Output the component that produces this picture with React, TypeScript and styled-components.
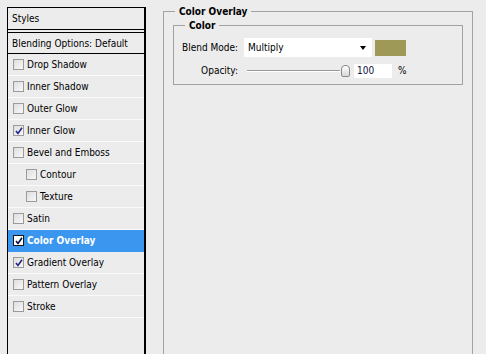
import React from 'react';
import styled, { createGlobalStyle } from 'styled-components';

const Global = createGlobalStyle`
  html, body { margin: 0; padding: 0; background: #ececec; }
  body {
    font-family: "DejaVu Sans Condensed", "DejaVu Sans", sans-serif;
    font-stretch: condensed;
    font-size: 10px;
    color: #000;
  }
  * { box-sizing: border-box; }
`;

const Page = styled.div`
  display: flex;
  align-items: flex-start;
  padding: 7px 0 0 7px;
  height: 354px;
  overflow: hidden;
`;

const LeftPanel = styled.div`
  width: 139px;
  height: 360px;
  flex: none;
  border: 1px solid #000;
  border-right-width: 2px;
  display: flex;
  flex-direction: column;
`;

const Header = styled.div`
  height: 22px;
  padding-left: 4px;
  display: flex;
  align-items: center;
  border-bottom: 1px solid #000;
`;

const Blending = styled.div`
  margin-top: 2px;
  height: 22px;
  padding-left: 4px;
  display: flex;
  align-items: center;
  border-top: 1px solid #000;
  border-bottom: 1px solid #000;
`;

const Row = styled.div<{ $indent?: boolean; $active?: boolean }>`
  height: 22px;
  display: flex;
  align-items: center;
  gap: 3px;
  padding-left: ${(p) => (p.$indent ? 18 : 5)}px;
  border-bottom: 1px solid ${(p) => (p.$active ? '#3b96ef' : '#fafafa')};
  background: ${(p) => (p.$active ? '#3b96ef' : 'transparent')};
  color: ${(p) => (p.$active ? '#fff' : '#000')};
  font-weight: ${(p) => (p.$active ? 'bold' : 'normal')};
`;

const Box = styled.span<{ $active?: boolean }>`
  width: 11px;
  height: 11px;
  flex: none;
  display: flex;
  align-items: center;
  justify-content: center;
  border: 1px solid ${(p) => (p.$active ? '#1a1a1a' : '#9a9b9b')};
  background: ${(p) => (p.$active ? '#fff' : 'linear-gradient(135deg, #dedede, #f8f8f8)')};
`;

const Right = styled.div`
  margin-left: 17px;
  margin-top: -2px;
  width: 310px;
  flex: none;
`;

const Group = styled.fieldset`
  margin: 0;
  min-width: 0;
  height: 400px;
  padding: 1px 9px 0 9px;
  border: 1px solid #a2a2a2;
`;

const Legend = styled.legend<{ $offset: number }>`
  font-weight: bold;
  line-height: 13px;
  padding: 0 4px;
  margin-left: ${(p) => p.$offset}px;
`;

const SubGroup = styled.fieldset`
  margin: 0;
  min-width: 0;
  padding: 6px 0 6px 0;
  border: 1px solid #a2a2a2;
  display: flex;
  flex-direction: column;
  gap: 6px;
`;

const FieldRow = styled.div<{ $h: number }>`
  display: flex;
  align-items: center;
  height: ${(p) => p.$h}px;
`;

const Label = styled.span`
  width: 64px;
  text-align: right;
  flex: none;
`;

const Select = styled.div`
  margin-left: 6px;
  width: 128px;
  height: 19px;
  background: #fff;
  display: flex;
  align-items: center;
  justify-content: space-between;
  padding: 0 6px 0 4px;
`;

const Arrow = styled.span`
  width: 0;
  height: 0;
  border-left: 3.5px solid transparent;
  border-right: 3.5px solid transparent;
  border-top: 4px solid #000;
`;

const Swatch = styled.div`
  margin-left: 3px;
  width: 31px;
  height: 16px;
  background: #9f9958;
`;

const Slider = styled.div`
  margin-left: 9px;
  width: 103px;
  height: 15px;
  display: flex;
  align-items: center;
  gap: 1px;
`;

const Track = styled.div`
  flex: 1;
  height: 2px;
  border-top: 1px solid #9a9a9a;
  border-bottom: 1px solid #fff;
`;

const Thumb = styled.div`
  width: 9px;
  height: 12px;
  border: 1px solid #8a8a8a;
  border-radius: 4px 4px 2px 2px;
  background: linear-gradient(#ffffff, #d8d8d8);
`;

const NumberBox = styled.div`
  margin-left: 4px;
  width: 38px;
  height: 14px;
  background: #fff;
  padding-left: 3px;
  display: flex;
  align-items: center;
  color: #10103a;
`;

const Percent = styled.span`
  margin-left: 6px;
`;

const Check = ({ dark }: { dark?: boolean }) => (
  <svg width="8" height="8" viewBox="0 0 8 8">
    <path d="M1 4 L3 6.5 L7 0.8" fill="none" stroke={dark ? '#0c0c3c' : '#25258f'} strokeWidth="1.6" />
  </svg>
);

const items: { label: string; checked?: boolean; indent?: boolean; active?: boolean }[] = [
  { label: 'Drop Shadow' },
  { label: 'Inner Shadow' },
  { label: 'Outer Glow' },
  { label: 'Inner Glow', checked: true },
  { label: 'Bevel and Emboss' },
  { label: 'Contour', indent: true },
  { label: 'Texture', indent: true },
  { label: 'Satin' },
  { label: 'Color Overlay', checked: true, active: true },
  { label: 'Gradient Overlay', checked: true },
  { label: 'Pattern Overlay' },
  { label: 'Stroke' },
];

export default function App() {
  return (
    <>
      <Global />
      <Page>
        <LeftPanel>
          <Header>Styles</Header>
          <Blending>Blending Options: Default</Blending>
          {items.map((it) => (
            <Row key={it.label} $indent={it.indent} $active={it.active}>
              <Box $active={it.active}>{it.checked && <Check dark={it.active} />}</Box>
              {it.label}
            </Row>
          ))}
        </LeftPanel>
        <Right>
          <Group>
            <Legend $offset={2}>Color Overlay</Legend>
            <SubGroup>
              <Legend $offset={11}>Color</Legend>
              <FieldRow $h={19}>
                <Label>Blend Mode:</Label>
                <Select>
                  <span>Multiply</span>
                  <Arrow />
                </Select>
                <Swatch />
              </FieldRow>
              <FieldRow $h={15}>
                <Label>Opacity:</Label>
                <Slider>
                  <Track />
                  <Thumb />
                </Slider>
                <NumberBox>100</NumberBox>
                <Percent>%</Percent>
              </FieldRow>
            </SubGroup>
          </Group>
        </Right>
      </Page>
    </>
  );
}
